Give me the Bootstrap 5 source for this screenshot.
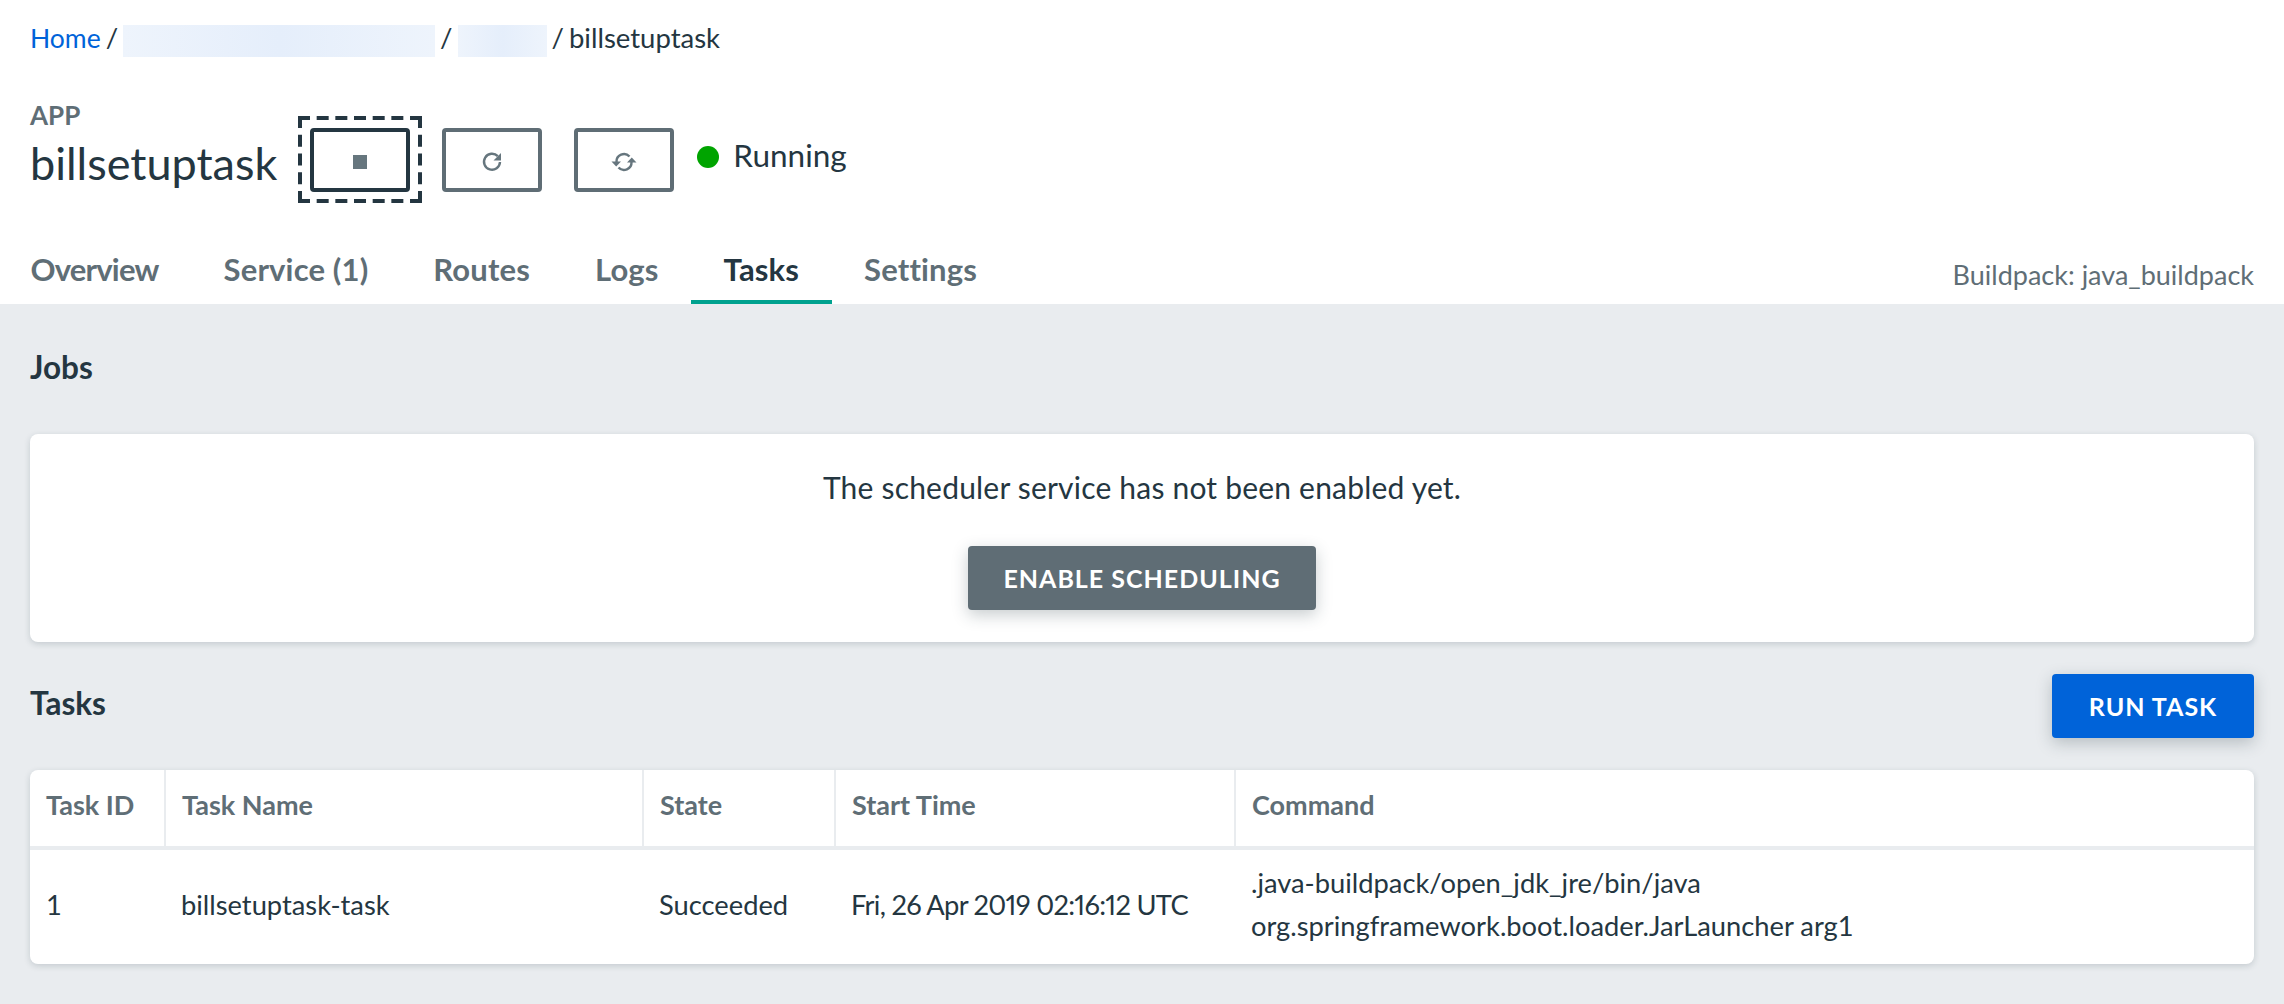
<!DOCTYPE html>
<html lang="en">
<head>
  <meta charset="UTF-8">
  <title>billsetuptask - Tasks</title>
  <link href="https://cdn.jsdelivr.net/npm/bootstrap@5.3.0/dist/css/bootstrap.min.css" rel="stylesheet">
  <style>
    body {
      background-color: #e9ecef;
      color: #243641;
      font-family: "Lato", "Liberation Sans", sans-serif;
      font-size: 28px;
      min-height: 100vh;
    }

    .app-head {
      background-color: #fff;
      padding: 18px 30px 0;
      height: 304px;
    }

    .crumbs {
      line-height: 40px;
      margin-bottom: 42px;
      font-size: 27.500px;
    }

    .crumbs a {
      color: #0063d9;
      font-size: 26.500px;
      text-decoration: none;
    }

    .crumb-blur {
      display: inline-block;
      height: 32px;
      vertical-align: middle;
      background: linear-gradient(90deg, #eef4fc, #e5eefb 50%, #eef4fc);
    }

    .crumb-sep {
      margin: 0 5px;
    }

    .app-label {
      color: #5f6e76;
      font-size: 26px;
      font-weight: 700;
      line-height: 30px;
    }

    .app-name {
      font-size: 45px;
      line-height: 66px;
      white-space: nowrap;
    }

    .app-actions {
      height: 64px;
      margin-bottom: 4px;
      margin-left: 33px;
    }

    .action-btn {
      position: relative;
      width: 100px;
      height: 64px;
      padding: 0;
      margin-right: 32px;
      border: 4px solid #5f6d75;
      border-radius: 4px;
      background: #fff;
    }

    .action-btn.is-focus {
      border-color: #243641;
    }

    .action-btn .btn-glyph {
      display: block;
      margin: 4px auto 0;
    }

    .focus-frame {
      position: absolute;
      left: -16px;
      top: -16px;
      overflow: visible;
    }

    .status-dot {
      width: 22px;
      height: 22px;
      border-radius: 50%;
      background-color: #00a400;
      margin-left: -9px;
      margin-right: 14px;
      margin-top: -6px;
    }

    .status-text {
      font-size: 31.500px;
      margin-top: -8px;
    }

    .tabs-row {
      margin-top: 40px;
    }

    .tabs-row .nav {
      margin-left: -32px;
    }

    .tabs-row .nav-link {
      color: #5f6e76;
      font-weight: 700;
      font-size: 31px;
      letter-spacing: .15px;
      line-height: 36px;
      padding: 15px 32.500px 13px;
      margin-bottom: -2px;
      border-bottom: 4px solid transparent;
    }

    .tabs-row .nav-link.tab-first {
      letter-spacing: -.8px;
    }

    .tabs-row .nav-link.active {
      color: #243641;
      border-bottom-color: #00a28f;
    }

    .buildpack {
      color: #5f6e76;
      font-size: 27px;
      line-height: 30px;
      padding-top: 24px;
    }

    .page-body {
      padding: 0 30px;
    }

    .section-title {
      font-size: 31.500px;
      font-weight: 700;
      line-height: 40px;
      margin: 0;
    }

    .jobs-title {
      padding-top: 43px;
      margin-bottom: 47px;
      box-sizing: content-box;
    }

    .tasks-title {
      padding-bottom: 6px;
    }

    .panel-card {
      border: 0;
      border-radius: 8px;
      box-shadow: 0 2px 6px rgba(36, 54, 65, .18);
      overflow: hidden;
    }

    .sched-body {
      padding: 33px 0 32px;
      text-align: center;
    }

    .sched-text {
      font-size: 30px;
      letter-spacing: .2px;
      line-height: 40px;
      margin-bottom: 39px;
    }

    .solid-btn {
      height: 64px;
      padding: 1px 0 0;
      border: 0;
      border-radius: 4px;
      color: #fff;
      font-size: 25px;
      font-weight: 700;
      letter-spacing: 1px;
      text-transform: uppercase;
      box-shadow: 0 5px 16px rgba(36, 54, 65, .25);
    }

    .btn-enable {
      width: 348px;
      background-color: #5f6d75;
    }

    .btn-run {
      width: 202px;
      background-color: #0063d9;
    }

    .tasks-row {
      margin-top: 32px;
      margin-bottom: 32px;
    }

    .tasks-table {
      margin: 0;
      table-layout: fixed;
      width: 100%;
      font-size: 27.300px;
    }

    .tasks-table th {
      color: #5f6e76;
      font-weight: 700;
      font-size: 27px;
      height: 78px;
      padding: 0 16px 6px;
      vertical-align: middle;
      border-bottom: 4px solid #e9ecef;
      border-right: 2px solid #e9ecef;
    }

    .tasks-table th:last-child {
      border-right: 0;
    }

    .tasks-table td {
      color: #243641;
      height: 116px;
      padding: 0 16px 6px;
      line-height: 43px;
      vertical-align: middle;
      border: 0;
    }

    .start-time {
      white-space: nowrap;
      font-variant-numeric: proportional-nums;
      letter-spacing: -.7px;
    }

    .col-id { width: 135px; }
    .col-name { width: 478px; }
    .col-state { width: 192px; }
    .col-start { width: 400px; }
  </style>
</head>
<body>
  <header class="app-head">
    <div class="crumbs">
      <a href="#">Home</a><span class="crumb-sep">/</span><span class="crumb-blur" style="width: 312px"></span><span class="crumb-sep">/</span><span class="crumb-blur" style="width: 89px"></span><span class="crumb-sep">/</span>billsetuptask
    </div>
    <div class="d-flex align-items-end">
      <div>
        <div class="app-label">APP</div>
        <div class="app-name">billsetuptask</div>
      </div>
      <div class="app-actions d-flex align-items-center">
        <button class="action-btn is-focus" type="button" aria-label="Stop">
          <svg class="focus-frame" width="124" height="87" viewBox="0 0 124 87" fill="none" stroke="#243641" stroke-width="4">
            <path d="M0 2H124M0 85H124" stroke-dasharray="12 6.670"/>
            <path d="M2 0V87M122 0V87" stroke-dasharray="12 6.750"/>
          </svg>
          <svg class="btn-glyph" width="14" height="14" viewBox="0 0 14 14"><rect width="14" height="14" fill="#66767e"/></svg>
        </button>
        <button class="action-btn" type="button" aria-label="Restart">
          <svg class="btn-glyph" width="22" height="22" viewBox="0 0 22 22">
            <path d="M16.800 5.200A8 8 0 1 0 19 11" fill="none" stroke="#66767e" stroke-width="2.400"/>
            <path d="M20 2v7.500h-7.500z" fill="#66767e"/>
          </svg>
        </button>
        <button class="action-btn" type="button" aria-label="Restage">
          <svg class="btn-glyph" width="28" height="22" viewBox="0 0 28 22">
            <path d="M6.500 11A7.500 7.500 0 0 1 19.500 5.500" fill="none" stroke="#66767e" stroke-width="2.400"/>
            <path d="M21.500 11A7.500 7.500 0 0 1 8.500 16.500" fill="none" stroke="#66767e" stroke-width="2.400"/>
            <path d="M1.500 10.500h9.500L6.200 15.500z" fill="#66767e"/>
            <path d="M26.500 11.500h-9.500l4.800-5z" fill="#66767e"/>
          </svg>
        </button>
        <span class="status-dot"></span>
        <span class="status-text">Running</span>
      </div>
    </div>
    <div class="tabs-row d-flex justify-content-between">
      <nav class="nav">
        <a class="nav-link tab-first" href="#">Overview</a>
        <a class="nav-link" href="#">Service (1)</a>
        <a class="nav-link" href="#">Routes</a>
        <a class="nav-link" href="#">Logs</a>
        <a class="nav-link active" href="#">Tasks</a>
        <a class="nav-link" href="#">Settings</a>
      </nav>
      <div class="buildpack">Buildpack: java_buildpack</div>
    </div>
  </header>

  <main class="page-body">
    <h2 class="section-title jobs-title">Jobs</h2>
    <div class="card panel-card">
      <div class="sched-body">
        <p class="sched-text">The scheduler service has not been enabled yet.</p>
        <button class="btn solid-btn btn-enable" type="button">Enable Scheduling</button>
      </div>
    </div>

    <div class="tasks-row d-flex justify-content-between align-items-center">
      <h2 class="section-title tasks-title">Tasks</h2>
      <button class="btn solid-btn btn-run" type="button">Run Task</button>
    </div>

    <div class="card panel-card">
      <table class="table tasks-table">
        <thead>
          <tr>
            <th class="col-id">Task ID</th>
            <th class="col-name">Task Name</th>
            <th class="col-state">State</th>
            <th class="col-start">Start Time</th>
            <th>Command</th>
          </tr>
        </thead>
        <tbody>
          <tr>
            <td>1</td>
            <td>billsetuptask-task</td>
            <td>Succeeded</td>
            <td class="start-time">Fri, 26 Apr 2019 02:16:12 UTC</td>
            <td>.java-buildpack/open_jdk_jre/bin/java<br>org.springframework.boot.loader.JarLauncher arg1</td>
          </tr>
        </tbody>
      </table>
    </div>
  </main>

  <script src="https://cdn.jsdelivr.net/npm/bootstrap@5.3.0/dist/js/bootstrap.bundle.min.js"></script>
</body>
</html>
